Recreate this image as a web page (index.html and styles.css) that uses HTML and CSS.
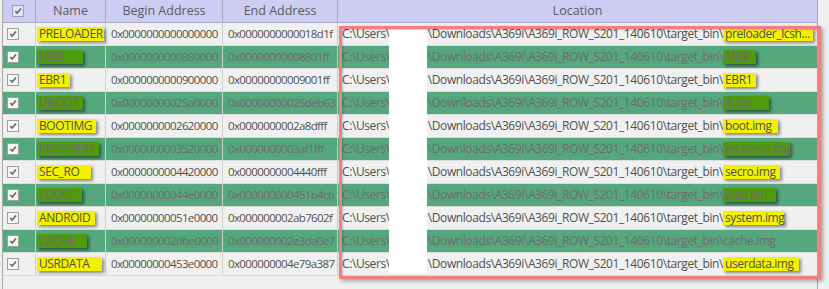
FILE: index.html
```html
<!DOCTYPE html>
<html>
<head>
<meta charset="utf-8">
<link rel="stylesheet" href="styles.css">
</head>
<body>
<div class="list">
  <div class="hdr">
    <div class="hc chk"><span class="box hbox"><svg viewBox="0 0 11 11"><path d="M2.5 5.5 L4.6 7.8 L8.8 2.8"/></svg></span></div>
    <div class="hc">Name</div>
    <div class="hc">Begin Address</div>
    <div class="hc">End Address</div>
    <div class="hc">Location</div>
  </div>

  <div class="row light">
    <div class="c chk"><span class="box"><svg viewBox="0 0 11 11"><path d="M2.5 5.5 L4.6 7.8 L8.8 2.8"/></svg></span></div>
    <div class="c name"><span class="hl y" style="width:67px">PRELOADER</span></div>
    <div class="c addr">0x0000000000000000</div>
    <div class="c addr">0x0000000000018d1f</div>
    <div class="c loc">C:\Users\<span class="gap"></span>\Downloads\A369i\A369i_ROW_S201_140610\target_bin\<span class="hl y" style="width:90px">preloader_lcsh...</span></div>
  </div>
  <div class="row green">
    <div class="c chk"><span class="box"><svg viewBox="0 0 11 11"><path d="M2.5 5.5 L4.6 7.8 L8.8 2.8"/></svg></span></div>
    <div class="c name"><span class="hl g" style="width:46px">MBR</span></div>
    <div class="c addr">0x0000000000880000</div>
    <div class="c addr">0x00000000008801ff</div>
    <div class="c loc">C:\Users\<span class="gap"></span>\Downloads\A369i\A369i_ROW_S201_140610\target_bin\<span class="hl g" style="width:33px">MBR</span></div>
  </div>
  <div class="row light">
    <div class="c chk"><span class="box"><svg viewBox="0 0 11 11"><path d="M2.5 5.5 L4.6 7.8 L8.8 2.8"/></svg></span></div>
    <div class="c name"><span class="hl y" style="width:33px">EBR1</span></div>
    <div class="c addr">0x0000000000900000</div>
    <div class="c addr">0x00000000009001ff</div>
    <div class="c loc">C:\Users\<span class="gap"></span>\Downloads\A369i\A369i_ROW_S201_140610\target_bin\<span class="hl y" style="width:33px">EBR1</span></div>
  </div>
  <div class="row green">
    <div class="c chk"><span class="box"><svg viewBox="0 0 11 11"><path d="M2.5 5.5 L4.6 7.8 L8.8 2.8"/></svg></span></div>
    <div class="c name"><span class="hl g" style="width:46px">UBOOT</span></div>
    <div class="c addr">0x00000000025a0000</div>
    <div class="c addr">0x00000000025deb63</div>
    <div class="c loc">C:\Users\<span class="gap"></span>\Downloads\A369i\A369i_ROW_S201_140610\target_bin\<span class="hl g" style="width:46px">lk.bin</span></div>
  </div>
  <div class="row light">
    <div class="c chk"><span class="box"><svg viewBox="0 0 11 11"><path d="M2.5 5.5 L4.6 7.8 L8.8 2.8"/></svg></span></div>
    <div class="c name"><span class="hl y" style="width:59px">BOOTIMG</span></div>
    <div class="c addr">0x0000000002620000</div>
    <div class="c addr">0x0000000002a8dfff</div>
    <div class="c loc">C:\Users\<span class="gap"></span>\Downloads\A369i\A369i_ROW_S201_140610\target_bin\<span class="hl y" style="width:55px">boot.img</span></div>
  </div>
  <div class="row green">
    <div class="c chk"><span class="box"><svg viewBox="0 0 11 11"><path d="M2.5 5.5 L4.6 7.8 L8.8 2.8"/></svg></span></div>
    <div class="c name"><span class="hl g" style="width:62px">RECOVERY</span></div>
    <div class="c addr">0x0000000003520000</div>
    <div class="c addr">0x0000000003af1fff</div>
    <div class="c loc">C:\Users\<span class="gap"></span>\Downloads\A369i\A369i_ROW_S201_140610\target_bin\<span class="hl g" style="width:67px">recovery.img</span></div>
  </div>
  <div class="row light">
    <div class="c chk"><span class="box"><svg viewBox="0 0 11 11"><path d="M2.5 5.5 L4.6 7.8 L8.8 2.8"/></svg></span></div>
    <div class="c name"><span class="hl y" style="width:54px">SEC_RO</span></div>
    <div class="c addr">0x0000000004420000</div>
    <div class="c addr">0x0000000004440fff</div>
    <div class="c loc">C:\Users\<span class="gap"></span>\Downloads\A369i\A369i_ROW_S201_140610\target_bin\<span class="hl y" style="width:57px">secro.img</span></div>
  </div>
  <div class="row green">
    <div class="c chk"><span class="box"><svg viewBox="0 0 11 11"><path d="M2.5 5.5 L4.6 7.8 L8.8 2.8"/></svg></span></div>
    <div class="c name"><span class="hl g" style="width:45px">LOGO</span></div>
    <div class="c addr">0x00000000044e0000</div>
    <div class="c addr">0x000000000451b4cb</div>
    <div class="c loc">C:\Users\<span class="gap"></span>\Downloads\A369i\A369i_ROW_S201_140610\target_bin\<span class="hl g" style="width:53px">logo.bin</span></div>
  </div>
  <div class="row light">
    <div class="c chk"><span class="box"><svg viewBox="0 0 11 11"><path d="M2.5 5.5 L4.6 7.8 L8.8 2.8"/></svg></span></div>
    <div class="c name"><span class="hl y" style="width:58px">ANDROID</span></div>
    <div class="c addr">0x00000000051e0000</div>
    <div class="c addr">0x000000002ab7602f</div>
    <div class="c loc">C:\Users\<span class="gap"></span>\Downloads\A369i\A369i_ROW_S201_140610\target_bin\<span class="hl y" style="width:61px">system.img</span></div>
  </div>
  <div class="row green">
    <div class="c chk"><span class="box"><svg viewBox="0 0 11 11"><path d="M2.5 5.5 L4.6 7.8 L8.8 2.8"/></svg></span></div>
    <div class="c name"><span class="hl g" style="width:50px">CACHE</span></div>
    <div class="c addr">0x000000002dbe0000</div>
    <div class="c addr">0x000000002e3da0e7</div>
    <div class="c loc">C:\Users\<span class="gap"></span>\Downloads\A369i\A369i_ROW_S201_140610\target_bin\<span class="plain">cache.img</span></div>
  </div>
  <div class="row light">
    <div class="c chk"><span class="box"><svg viewBox="0 0 11 11"><path d="M2.5 5.5 L4.6 7.8 L8.8 2.8"/></svg></span></div>
    <div class="c name"><span class="hl y" style="width:65px">USRDATA</span></div>
    <div class="c addr">0x00000000453e0000</div>
    <div class="c addr">0x000000004e79a387</div>
    <div class="c loc">C:\Users\<span class="gap"></span>\Downloads\A369i\A369i_ROW_S201_140610\target_bin\<span class="hl y" style="width:76px">userdata.img</span></div>
  </div>

  <div class="redact"></div>
  <div class="frame"></div>
</div>
</body>
</html>
```

FILE: styles.css
```css
html, body {
  margin: 0;
  padding: 0;
}
body {
  width: 829px;
  height: 289px;
  overflow: hidden;
  background: #f0f0f0;
  font-family: "Open Sans", "Noto Sans", sans-serif;
  font-size: 12px;
  letter-spacing: -0.4px;
}
.list {
  position: relative;
  margin-left: 2px;
  width: 814px;
  height: 289px;
  border-left: 1px solid #a8a8a8;
  border-right: 1px solid #a8a8a8;
}
.hdr, .row {
  display: grid;
  grid-template-columns: 33px 70px 117px 115px 479px;
}
.hdr {
  height: 22px;
  background: #cdcdf4;
  border-bottom: 1px solid #a9a9c8;
}
.hc {
  border-right: 1px solid #a7a7bd;
  color: #5a5a5a;
  font-size: 12.5px;
  letter-spacing: 0;
  line-height: 22px;
  text-align: center;
}
.hc:last-child { border-right: none; }
.row {
  height: 22px;
  border-bottom: 1px solid #dcdcdc;
}
.light { background: #f0f0f0; color: #505050; }
.green { background: #55a87e; color: #6c6c6c; }
.c {
  border-right: 1px solid #cfcfcf;
  line-height: 22px;
  padding-left: 5px;
  white-space: nowrap;
}
.c:last-child { border-right: none; }
.addr {
  font-size: 11.5px;
  letter-spacing: -0.62px;
  padding-left: 5px;
}
.chk { padding-left: 4px; display: flex; align-items: center; }
.hdr .chk { justify-content: flex-start; padding-left: 9px; align-items: center; }
.box {
  display: inline-block;
  width: 12px;
  height: 12px;
  box-sizing: border-box;
  border: 1px solid #a0a0a0;
  background: #f6f6f6;
}
.hbox { background: #e4e4f8; border-color: #9c9cb4; }
.box svg {
  display: block;
  width: 10px;
  height: 10px;
  fill: none;
  stroke: #6a6a6a;
  stroke-width: 1.8;
}
.name { padding-left: 1px; }
.hl {
  display: inline-block;
  box-sizing: border-box;
  height: 14px;
  line-height: 14px;
  padding-left: 2px;
  vertical-align: middle;
  margin-top: -2px;
}
.y {
  background: #f2f200;
  box-shadow: 2px 2px 3px rgba(0,0,0,0.45);
}
.g {
  background: #4f9c0a;
  box-shadow: 2px 2px 3px rgba(0,0,0,0.5);
}
.loc { padding-left: 4px; }
.gap { display: inline-block; width: 38px; }
.redact {
  position: absolute;
  left: 386px;
  top: 28px;
  width: 38px;
  height: 245px;
  background: #ffffff;
}
.frame {
  position: absolute;
  left: 336px;
  top: 26px;
  width: 482px;
  height: 253px;
  box-sizing: border-box;
  border: 3px solid #f28080;
  box-shadow: 2px 2px 4px rgba(0,0,0,0.35), inset 1px 1px 2px rgba(0,0,0,0.2);
}
```
